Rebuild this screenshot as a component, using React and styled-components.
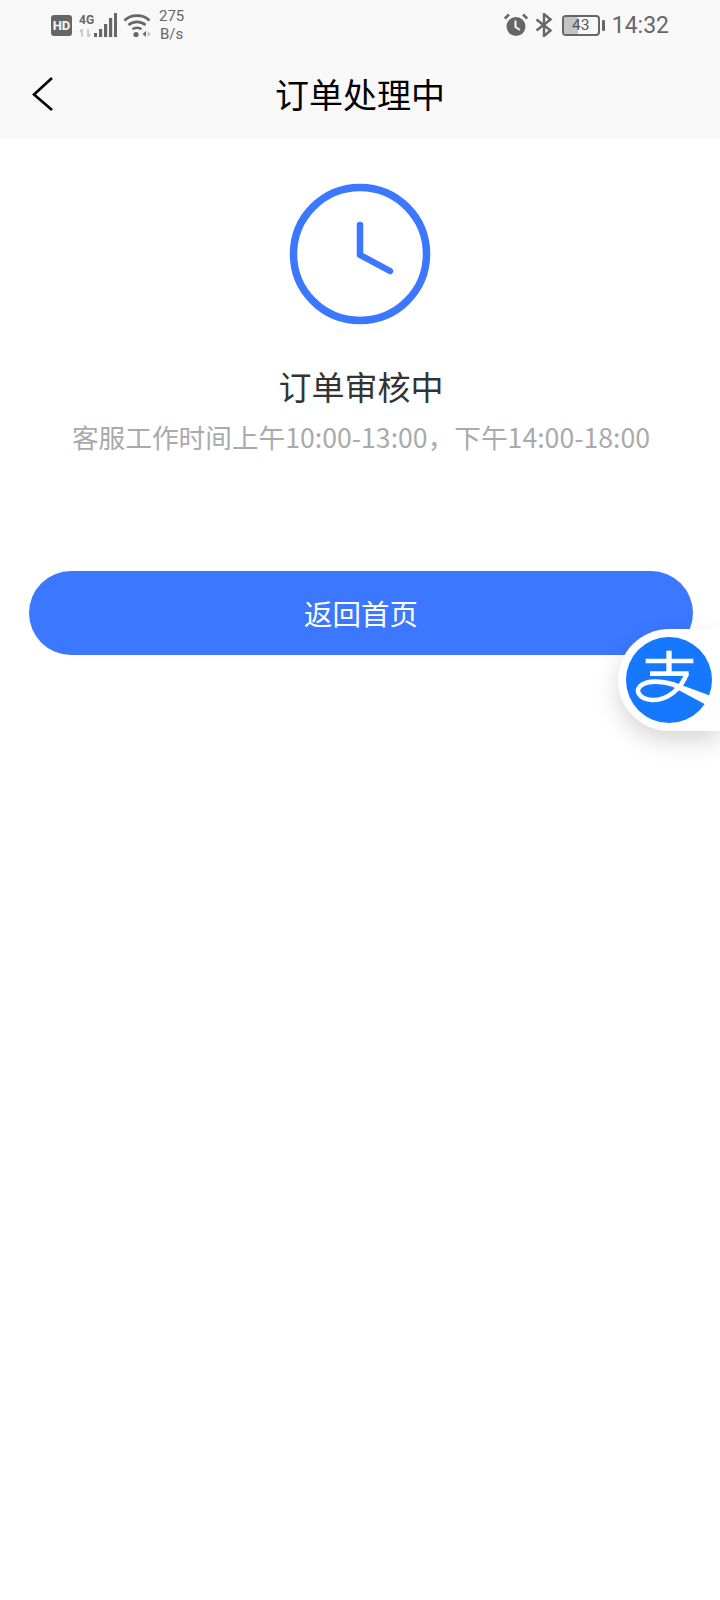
import styled, { createGlobalStyle } from 'styled-components';

const GlobalStyle = createGlobalStyle`
  html, body {
    margin: 0;
    padding: 0;
    background: #fff;
  }
  body {
    font-family: "Noto Sans CJK SC", "Noto Sans", sans-serif;
  }
`;

const App = () => {
  return (
    <Page>
      <GlobalStyle />
      <TopArea>
        <StatusBar>
          <StatusLeft>
            <HdBadge>HD</HdBadge>
            <SignalBox>
              <NetLabel>4G</NetLabel>
              <svg width="14" height="8" viewBox="0 0 14 8">
                <path d="M3 0v8M1 3l2-3M9 0v8M9 8l2-3" stroke="#c4c4c4" strokeWidth="1.6" fill="none" />
              </svg>
              <SignalBars>
                <svg width="23" height="24" viewBox="0 0 23 24" fill="#666">
                  <rect x="0" y="20" width="3" height="4" />
                  <rect x="5" y="16" width="3.2" height="8" />
                  <rect x="10" y="11" width="3.2" height="13" />
                  <rect x="15" y="5" width="3.2" height="19" />
                  <rect x="20" y="0" width="3" height="24" />
                </svg>
              </SignalBars>
            </SignalBox>
            <svg width="28" height="26" viewBox="0 0 28 26" fill="none">
              <path d="M1.5 8.5C8 2 20 2 26.5 8.5" stroke="#666" strokeWidth="2.6" />
              <path d="M5.5 13C10 8.8 18 8.8 22.5 13" stroke="#666" strokeWidth="2.6" />
              <path d="M9.5 17.2C12 15.2 16 15.2 18.5 17.2" stroke="#666" strokeWidth="2.4" />
              <circle cx="13" cy="22.5" r="2.6" fill="#666" />
              <path d="M23 19v6l-3.5-3z" fill="#666" />
              <path d="M24.5 19v6l3.5-3z" fill="#c4c4c4" />
            </svg>
            <Speed>
              <span>275</span>
              <span>B/s</span>
            </Speed>
          </StatusLeft>
          <StatusRight>
            <svg width="24" height="24" viewBox="0 0 24 24">
              <circle cx="12" cy="13.5" r="9.5" fill="#666" />
              <path d="M0.8 5.5L5 1.5M23.2 5.5L19 1.5" stroke="#666" strokeWidth="2.6" />
              <path d="M11.5 7.5v6.5l4.5 3" stroke="#f8f8f8" strokeWidth="2" fill="none" />
            </svg>
            <svg width="18" height="24" viewBox="0 0 18 24" fill="none">
              <path d="M1.5 6.5L15.5 17.5L9 23V1L15.5 6.5L1.5 17.5" stroke="#666" strokeWidth="2.4" />
            </svg>
            <Battery>
              <BatteryBody>
                <BatteryFill />
                <BatteryText>43</BatteryText>
              </BatteryBody>
              <BatteryCap />
            </Battery>
            <Clock>14:32</Clock>
          </StatusRight>
        </StatusBar>
        <NavBar>
          <BackButton>
            <svg width="24" height="36" viewBox="0 0 24 36" fill="none">
              <path d="M21 2L3 18.5L21 34" stroke="#000" strokeWidth="2.6" />
            </svg>
          </BackButton>
          <NavTitle>订单处理中</NavTitle>
        </NavBar>
      </TopArea>
      <Content>
        <ClockIcon width="142" height="142" viewBox="0 0 142 142" fill="none">
          <circle cx="71" cy="71" r="66.5" stroke="#3b78ff" strokeWidth="7.5" />
          <path d="M71 42V72L101 88" stroke="#3b78ff" strokeWidth="6.5" strokeLinecap="round" strokeLinejoin="round" />
        </ClockIcon>
        <StatusTitle>订单审核中</StatusTitle>
        <StatusNote>客服工作时间上午10:00-13:00，下午14:00-18:00</StatusNote>
        <HomeButton>返回首页</HomeButton>
      </Content>
      <FloatTab>
        <svg width="86" height="86" viewBox="108 111 258 258">
          <circle cx="237" cy="240" r="129" fill="#1677ff" />
          <g stroke="#fff" fill="none" strokeWidth="14">
            <path d="M167 183H310" />
            <path d="M180 221H296" />
            <path d="M237 152V221" strokeWidth="16" />
            <path d="M290 221C274 266 232 302 186 300C148 298 130 270 156 254C176 242 214 243 252 254" strokeWidth="14" />
          </g>
          <path d="M250 246L363 288L345 313L250 262Z" fill="#fff" />
        </svg>
      </FloatTab>
    </Page>
  );
};

export default App;

const Page = styled.div`
  position: relative;
  width: 720px;
  height: 1600px;
  overflow: hidden;
  background: #fff;
`;

const TopArea = styled.div`
  background: #f8f8f8;
  height: 139px;
`;

const StatusBar = styled.div`
  display: flex;
  justify-content: space-between;
  align-items: center;
  height: 50px;
  padding: 0 51px;
  color: #666;
`;

const StatusLeft = styled.div`
  display: flex;
  align-items: center;
  gap: 6px;
`;

const StatusRight = styled.div`
  display: flex;
  align-items: center;
  gap: 7px;
`;

const HdBadge = styled.div`
  width: 21px;
  height: 21px;
  border-radius: 3px;
  background: #666;
  color: #f8f8f8;
  font-family: "Roboto", sans-serif;
  font-size: 13px;
  font-weight: 700;
  line-height: 21px;
  text-align: center;
`;

const SignalBox = styled.div`
  position: relative;
  display: grid;
  grid-template-columns: 14px 23px;
  grid-template-rows: 14px 10px;
  column-gap: 1px;
  width: 38px;
  margin-left: 1px;
  height: 24px;

  svg {
    align-self: end;
  }
`;

const NetLabel = styled.div`
  font-family: "Roboto", sans-serif;
  font-size: 12px;
  font-weight: 700;
  line-height: 14px;
  color: #666;
`;

const SignalBars = styled.div`
  grid-column: 2;
  grid-row: 1 / span 2;
  height: 24px;
`;

const Speed = styled.div`
  display: flex;
  flex-direction: column;
  align-items: center;
  margin-left: 2px;
  font-family: "Roboto", sans-serif;
  font-size: 15px;
  line-height: 18px;
  color: #666;
`;

const Battery = styled.div`
  display: flex;
  align-items: center;
  gap: 2px;
  margin-left: 2px;
`;

const BatteryBody = styled.div`
  position: relative;
  width: 34px;
  height: 17px;
  border: 2px solid #666;
  border-radius: 4px;
  overflow: hidden;
`;

const BatteryFill = styled.div`
  width: 43%;
  height: 100%;
  background: #c4c4c4;
`;

const BatteryText = styled.div`
  position: absolute;
  inset: 0;
  font-family: "Roboto", sans-serif;
  font-size: 15.5px;
  line-height: 17px;
  text-align: center;
  color: #555;
`;

const BatteryCap = styled.div`
  width: 3px;
  height: 11px;
  background: #666;
  border-radius: 1px;
`;

const Clock = styled.div`
  font-family: "Roboto", sans-serif;
  font-size: 23px;
  color: #666;
`;

const NavBar = styled.div`
  position: relative;
  display: flex;
  justify-content: center;
  align-items: center;
  height: 89px;
`;

const BackButton = styled.div`
  position: absolute;
  left: 31px;
  top: 26px;
  width: 24px;
  height: 36px;
`;

const NavTitle = styled.div`
  font-size: 34px;
  line-height: 48px;
  color: #000;
  margin-bottom: 1px;
`;

const Content = styled.div`
  display: flex;
  flex-direction: column;
  align-items: center;
  padding: 44px 27px 0 29px;
`;

const ClockIcon = styled.svg`
  margin-right: 2px;
`;

const StatusTitle = styled.div`
  margin-top: 38px;
  font-size: 33px;
  line-height: 46px;
  color: #333;
`;

const StatusNote = styled.div`
  margin-top: 8px;
  font-size: 26.67px;
  line-height: 40px;
  color: #aaa;
  white-space: nowrap;
`;

const HomeButton = styled.div`
  width: 100%;
  height: 84px;
  margin-top: 114px;
  border-radius: 42px;
  background: #3b78ff;
  color: #fff;
  font-size: 28.5px;
  line-height: 84px;
  text-align: center;
`;

const FloatTab = styled.div`
  position: absolute;
  left: 618px;
  top: 629px;
  display: flex;
  align-items: center;
  width: 102px;
  height: 102px;
  padding-left: 8px;
  box-sizing: border-box;
  border-radius: 51px 0 0 51px;
  background: #fff;
  box-shadow: 0 10px 24px rgba(0, 0, 0, 0.16);
`;
